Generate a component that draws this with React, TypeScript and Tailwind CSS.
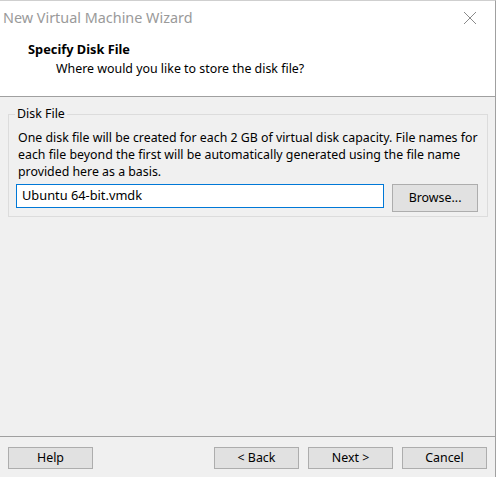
const font = { fontFamily: '"Noto Sans", "Segoe UI", sans-serif' };

const Btn: React.FC<{ label: string; className?: string }> = ({ label, className }) => (
  <button
    className={`h-[22px] w-[85px] bg-[#e1e1e1] border border-[#adadad] text-[12.4px] text-black leading-none ${className ?? ""}`}
  >
    {label}
  </button>
);

export default function App() {
  return (
    <div className="w-[498px] h-[477px] bg-white flex" style={font}>
      <div className="w-[496px] h-full flex flex-col border-t border-r border-[#a0a0a0] border-t-[#cfcfcf]">
        {/* Header */}
        <div className="h-[95px] bg-white flex flex-col">
          <div className="h-[33px] flex items-center justify-between pl-[3px] pr-[18px]">
            <span className="text-[14.4px] text-[#9a9a9a]">New Virtual Machine Wizard</span>
            <svg width="14" height="14" viewBox="0 0 14 14">
              <path d="M1 1 L13 13 M13 1 L1 13" stroke="#8a8a8a" strokeWidth="1" />
            </svg>
          </div>
          <div className="pl-[28px] text-[12.8px] font-bold text-black leading-[18px] mt-[6px]">Specify Disk File</div>
          <div className="pl-[56px] text-[12.4px] text-black leading-[18px] mt-[2px]">
            Where would you like to store the disk file?
          </div>
        </div>
        <div className="h-px bg-[#a0a0a0]" />

        {/* Body */}
        <div className="flex-1 bg-[#f0f0f0] px-[8px] pt-[17px]">
          <div className="relative border border-[#dcdcdc] w-[480px] h-[103px] px-[9px] pt-[14px]">
            <span className="absolute -top-[10px] left-[6px] bg-[#f0f0f0] px-[2px] text-[12.4px] leading-[18px] text-black">
              Disk File
            </span>
            <p className="text-[12.35px] leading-[17px] text-black">
              One disk file will be created for each 2 GB of virtual disk capacity. File names for each file beyond the first will be automatically generated using the file name provided here as a basis.
            </p>
            <div className="flex items-start mt-[4px] -ml-[2px]">
              <div className="w-[369px] h-[24px] bg-white border border-[#0078d7] flex items-center pl-[5px] text-[12.8px] text-black">
                Ubuntu 64-bit.vmdk
              </div>
              <button className="ml-[8px] h-[28px] w-[86px] bg-[#e1e1e1] border border-[#adadad] text-[12.4px] text-black">
                Browse...
              </button>
            </div>
          </div>
        </div>

        {/* Footer */}
        <div className="h-px bg-[#a0a0a0]" />
        <div className="h-[40px] bg-[#f0f0f0] flex pt-[10px] pl-[8px]">
          <Btn label="Help" />
          <Btn label="< Back" className="ml-[121px]" />
          <Btn label="Next >" className="ml-[9px]" />
          <Btn label="Cancel" className="ml-[9px]" />
        </div>
      </div>
    </div>
  );
}
